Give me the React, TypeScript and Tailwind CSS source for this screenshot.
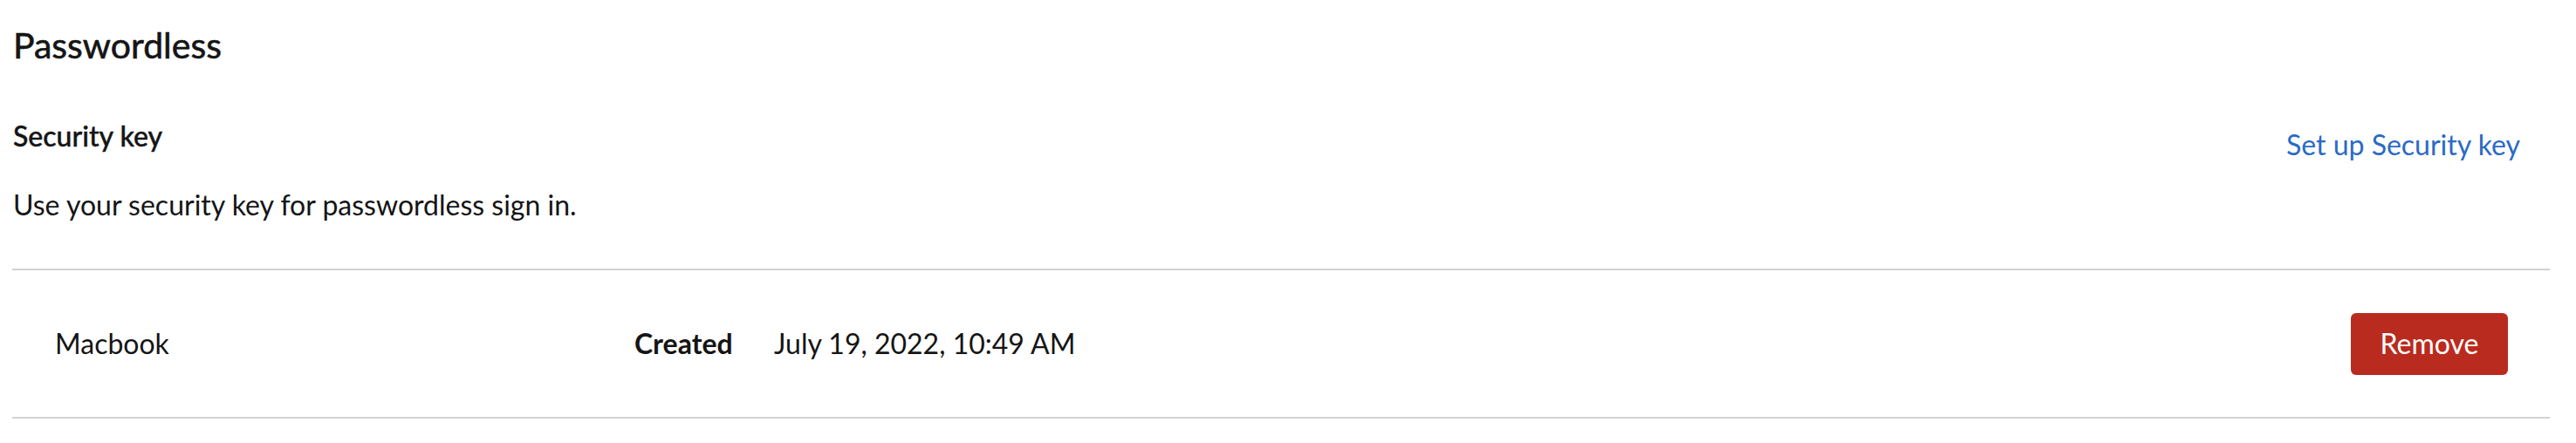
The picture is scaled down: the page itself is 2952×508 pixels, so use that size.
export default function App() {
  return (
    <div className="w-[2952px] h-[508px] bg-white pl-[14px] pr-[30px] pt-[28px] text-[#151515] font-['Lato','Open_Sans',sans-serif]">
      {/* Section title */}
      <h2 className="pl-[1px] text-[41px] leading-[48px] font-normal [-webkit-text-stroke:0.6px_#151515]">
        Passwordless
      </h2>

      {/* Security key header */}
      <div className="mt-[56px] flex items-start justify-between">
        <div className="pl-[1px]">
          <h3 className="text-[32px] leading-[48px] font-medium [-webkit-text-stroke:0.4px_#151515]">
            Security key
          </h3>
          <p className="mt-[31px] text-[32px] leading-[48px]">
            Use your security key for passwordless sign in.
          </p>
        </div>
        <a href="#" className="mt-[10px] pr-[34px] text-[32px] leading-[48px] text-[#2b6ac4]">
          Set up Security key
        </a>
      </div>

      {/* Credential list */}
      <ul className="mt-[49px] border-t-2 border-[#d2d2d2]">
        <li className="flex h-[170px] items-center border-b-2 border-[#d2d2d2] px-[49px] text-[32px] leading-[48px]">
          <span className="w-[664px]">Macbook</span>
          <dl className="flex">
            <dt className="w-[160px] font-bold">Created</dt>
            <dd>July 19, 2022, 10:49 AM</dd>
          </dl>
          <button className="ml-auto mr-[-1px] h-[71px] w-[180px] rounded-[6px] bg-[#b92b1e] text-[32px] text-white">
            Remove
          </button>
        </li>
      </ul>
    </div>
  );
}
